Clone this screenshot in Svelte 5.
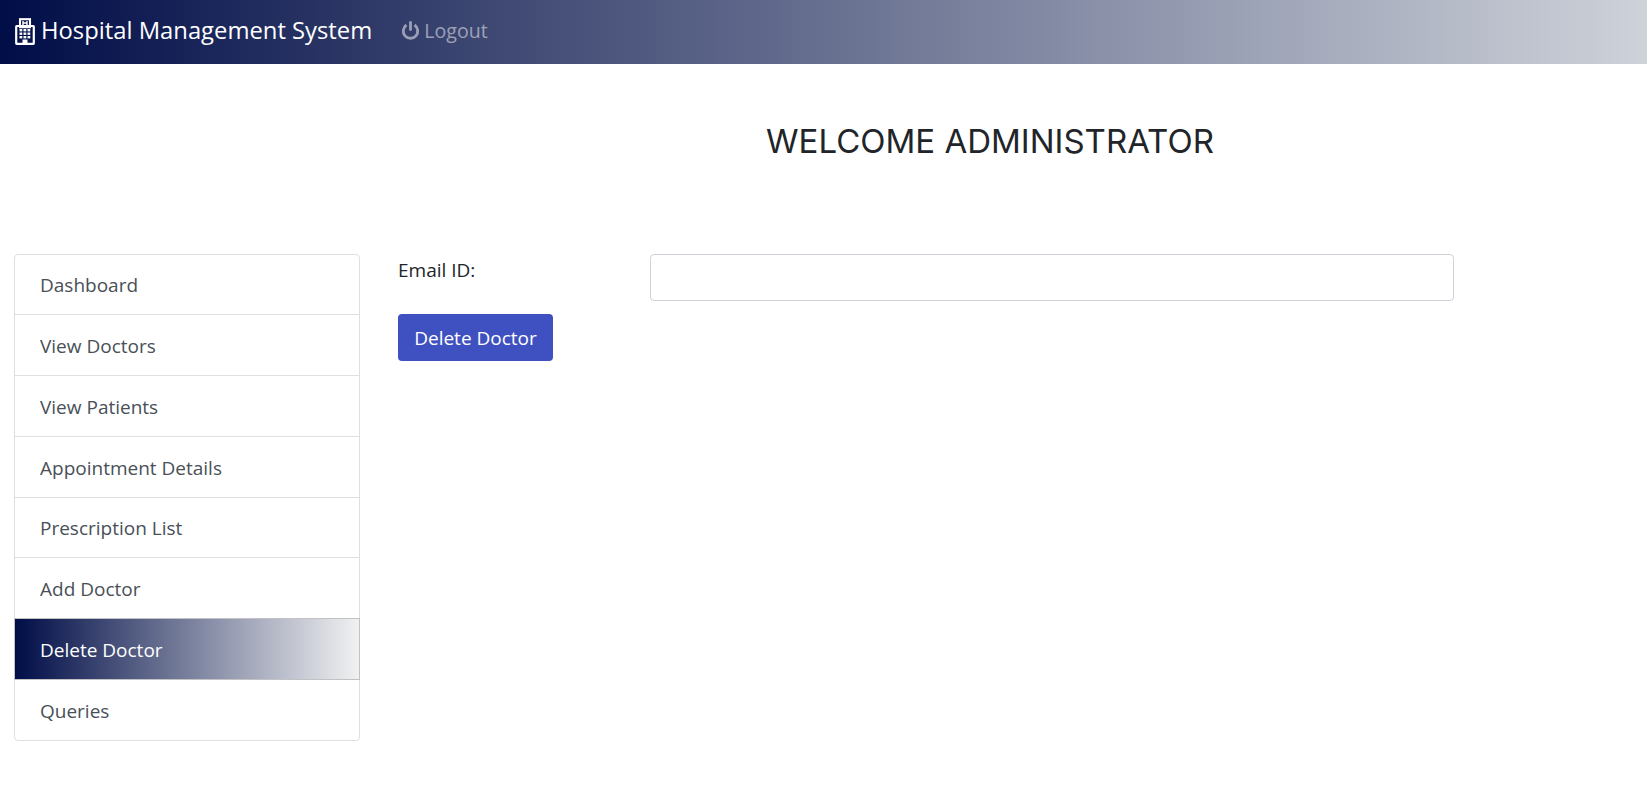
<script>
  const items = ['Dashboard','View Doctors','View Patients','Appointment Details','Prescription List','Add Doctor','Delete Doctor','Queries'];
  const windowXs = [4.500, 8.500, 12.500];
  const windowYs = [11, 14.500, 18];
</script>

<nav class="navbar">
  <a class="brand" href="#top">
    <svg class="hospital" viewBox="0 0 20 27" aria-hidden="true">
      <rect x="5" y="1.200" width="10" height="8" fill="#0a1650" stroke="currentColor" stroke-width="2.100" />
      <path d="M8 3v4M12 3v4M8 5h4" fill="none" stroke="currentColor" stroke-width="1.400" />
      <rect x="1.200" y="8" width="17.600" height="17.800" rx="0.500" fill="none" stroke="currentColor" stroke-width="2.200" />
      {#each windowYs as y}
        {#each windowXs as x}
          <rect {x} {y} width="2.800" height="2.400" fill="currentColor" />
        {/each}
      {/each}
      <rect x="7.500" y="21.500" width="5" height="4.500" fill="currentColor" />
    </svg>
    Hospital Management System
  </a>
  <a class="logout" href="#top">
    <svg class="power" viewBox="0 0 20 20" aria-hidden="true"><path d="M5.800 4.800a7.600 7.600 0 1 0 8.400 0" fill="none" stroke="currentColor" stroke-width="3" /><path d="M10 2v7.500" fill="none" stroke="currentColor" stroke-width="3" stroke-linecap="round" /></svg>
    Logout
  </a>
</nav>

<main>
  <h3>WELCOME ADMINISTRATOR</h3>
  <div class="row">
    <div class="list">
      {#each items as item}
        <a href="#top" class:active={item === 'Delete Doctor'}>{item}</a>
      {/each}
    </div>
    <form class="content">
      <div class="field">
        <label for="email">Email ID:</label>
        <input id="email" type="email" />
      </div>
      <button type="button">Delete Doctor</button>
    </form>
  </div>
</main>

<style>
  :global(body) {
    margin: 0;
    background: #fff;
    color: #212529;
    font-family: "Open Sans", "Noto Sans", sans-serif;
    font-size: 19px;
  }
  .navbar {
    height: 64px;
    display: flex;
    align-items: center;
    padding: 0 15px 4px;
    box-sizing: border-box;
    background: linear-gradient(to right, #000d47, #ced2d9);
  }
  a { text-decoration: none; }
  .brand {
    color: #fff;
    font-size: 23.800px;
    display: flex;
    align-items: center;
    gap: 6px;
    margin-right: 29px;
  }
  .hospital { width: 20px; height: 27px; margin-top: 3px; }
  .logout {
    color: rgba(255,255,255,.5);
    display: flex;
    align-items: center;
    gap: 4px;
    font-size: 19.600px;
  }
  .power { width: 19px; height: 20px; }
  h3 {
    font-family: "Inter", "Noto Sans", sans-serif;
    font-weight: 400;
    font-size: 33px;
    line-height: 40px;
    margin: 0;
    padding: 57px 0 57px 333px;
    height: 76px;
    box-sizing: content-box;
    width: 1314px;
    text-align: center;
    white-space: nowrap;
  }
  .row {
    display: flex;
    padding: 0 14px;
    gap: 38px;
  }
  .list {
    width: 346px;
    box-sizing: border-box;
    display: flex;
    flex-direction: column;
    flex: none;
    height: 487px;
    margin-top: -0.400px;
  }
  .list a {
    flex: none;
    height: 61.750px;
    margin-bottom: -1px;
    box-sizing: border-box;
    display: flex;
    align-items: center;
    padding: 2px 24px 0 24px;
    color: #495057;
    border: 1px solid #dfdfdf;
    text-indent: 1px;
  }
  .list a:first-child { border-radius: 4px 4px 0 0; }
  .list a:last-child { border-radius: 0 0 4px 4px; margin-bottom: 0; }
  .list a.active {
    color: #fff;
    background: linear-gradient(to right, #000d47, #f0f1f1);
    border-color: #c2c2c4;
    position: relative;
  }
  .content { flex: 1; }
  .field {
    display: flex;
    align-items: flex-start;
    margin-bottom: 13px;
  }
  label {
    width: 252px;
    padding-top: 3px;
  }
  input {
    width: 804px;
    height: 47px;
    box-sizing: border-box;
    border: 1px solid #ced4da;
    border-radius: 4px;
    background: #fff;
  }
  button {
    display: block;
    height: 47px;
    width: 155px;
    border: 0;
    border-radius: 4px;
    background: #3f51c1;
    color: #fff;
    font: inherit;
  }
</style>
